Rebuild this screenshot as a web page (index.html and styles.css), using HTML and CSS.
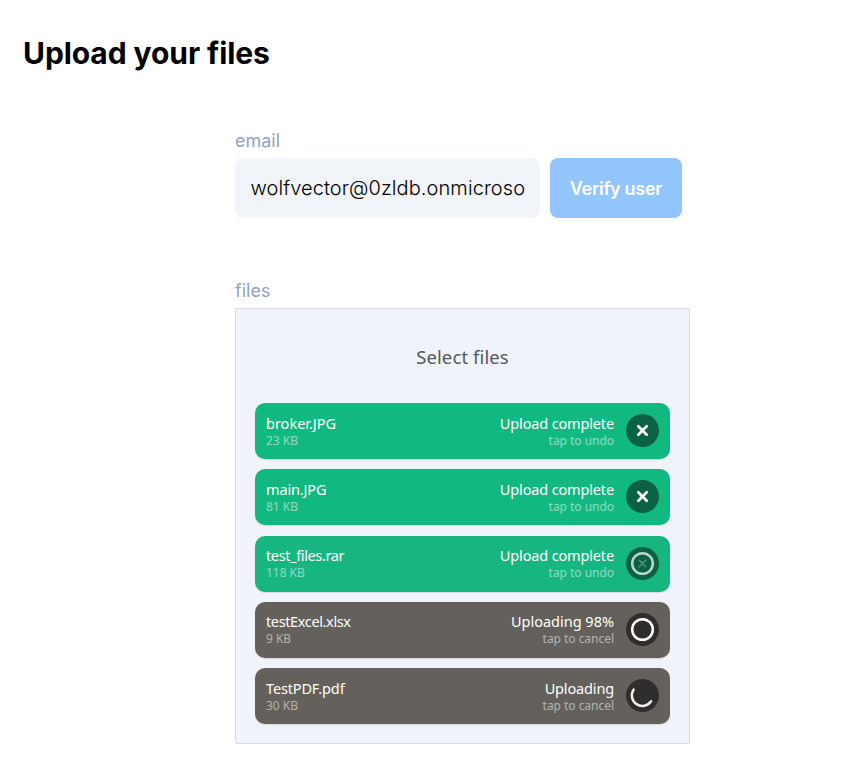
FILE: index.html
```html
<!DOCTYPE html>
<html lang="en">
<head>
<meta charset="utf-8">
<title>Upload your files</title>
<link rel="stylesheet" href="styles.css">
</head>
<body>
<h1>Upload your files</h1>
<main class="form">
  <label class="label" for="email">email</label>
  <div class="email-row">
    <div class="email" id="email">wolfvector@0zldb.onmicroso</div>
    <button class="verify">Verify user</button>
  </div>
  <div class="label files-label">files</div>
  <section class="drop">
    <div class="select"><span>Select files</span></div>
    <ul class="list">
      <li class="item done">
        <div class="info"><span class="name wide">broker.JPG</span><span class="sub">23 KB</span></div>
        <div class="status"><span class="name">Upload complete</span><span class="sub">tap to undo</span></div>
        <svg class="action" viewBox="0 0 33 33"><circle cx="16.5" cy="16.5" r="16.5"/><path class="cross" d="M12.3 12.3l8.4 8.4M20.7 12.3l-8.4 8.4"/></svg>
      </li>
      <li class="item done">
        <div class="info"><span class="name">main.JPG</span><span class="sub">81 KB</span></div>
        <div class="status"><span class="name">Upload complete</span><span class="sub">tap to undo</span></div>
        <svg class="action" viewBox="0 0 33 33"><circle cx="16.5" cy="16.5" r="16.5"/><path class="cross" d="M12.3 12.3l8.4 8.4M20.7 12.3l-8.4 8.4"/></svg>
      </li>
      <li class="item done settling">
        <div class="info"><span class="name tight">test_files.rar</span><span class="sub">118 KB</span></div>
        <div class="status"><span class="name">Upload complete</span><span class="sub">tap to undo</span></div>
        <svg class="action" viewBox="0 0 33 33"><circle cx="16.5" cy="16.5" r="16.5"/><path class="cross faint" d="M13.3 13.3l6.4 6.4M19.7 13.3l-6.4 6.4"/><circle class="ring fading" cx="16.5" cy="16.5" r="10.3"/></svg>
      </li>
      <li class="item busy">
        <div class="info"><span class="name tight">testExcel.xlsx</span><span class="sub">9 KB</span></div>
        <div class="status"><span class="name wide">Uploading 98%</span><span class="sub">tap to cancel</span></div>
        <svg class="action" viewBox="0 0 33 33"><circle cx="16.5" cy="16.5" r="16.5"/><circle class="ring" cx="16.5" cy="16.5" r="10.3"/></svg>
      </li>
      <li class="item busy">
        <div class="info"><span class="name">TestPDF.pdf</span><span class="sub">30 KB</span></div>
        <div class="status"><span class="name">Uploading</span><span class="sub">tap to cancel</span></div>
        <svg class="action" viewBox="0 0 33 33"><circle cx="16.5" cy="16.5" r="16.5"/><path class="ring arc" d="M7.6 10.6A10.3 10.3 0 0 0 25.1 22.2"/></svg>
      </li>
    </ul>
  </section>
</main>
</body>
</html>
```
FILE: styles.css
```css
* { box-sizing: border-box; }
body { margin: 0; padding: 35px 0 0 23px; background: #fff; font-family: Inter, sans-serif; }
h1 { margin: 0; font-size: 30px; line-height: 36px; font-weight: 650; letter-spacing: -.08px; color: #000; }
.form { width: 455px; margin: 58px 0 0 212px; }
.label { display: block; height: 29px; font-size: 18px; line-height: 24px; color: #94a3b8; font-weight: 400; }
.files-label { margin-top: 61px; }
.email-row { display: flex; gap: 10px; }
.email { width: 305px; height: 60px; padding: 0 15.5px; border-radius: 8px; background: #f1f5f9; font-size: 20px; line-height: 60px; font-weight: 300; letter-spacing: .08px; color: #000; white-space: nowrap; overflow: hidden; }
.verify { width: 132px; height: 60px; padding: 0; border: 0; border-radius: 8px; background: #93c5fd; color: #fff; font: 600 18px Inter, sans-serif; letter-spacing: -.3px; }
.drop { height: 436px; border: 1px solid #d5dae3; border-radius: 2px; background: #f0f3f9; padding: 0 19px; font-family: "Noto Sans", sans-serif; }
.select { height: 94px; line-height: 95px; text-align: center; font-size: 18.5px; letter-spacing: .1px; color: #55595e; }
.list { list-style: none; margin: 0; padding: 0; display: grid; gap: 10.25px; }
.item { height: 56px; padding: 0 11px; border-radius: 10px; display: flex; align-items: center; color: #fff; box-shadow: 0 1px 1px rgba(0,0,0,.12); }
.done { background: #11b981; }
.settling { background: #17b57f; }
.busy { background: #64605c; }
.info, .status { display: flex; flex-direction: column; white-space: nowrap; }
.status { margin-left: auto; align-items: flex-end; }
.name { font-size: 14.5px; line-height: 19px; letter-spacing: -.15px; }
.name.wide { letter-spacing: 0; }
.name.tight { letter-spacing: -.37px; }
.sub { font-size: 12px; line-height: 16px; letter-spacing: -.03px; opacity: .5; }
.action { width: 33px; height: 33px; margin-left: 12px; flex: none; position: relative; top: -.5px; }
.action circle { fill: #0b6143; }
.busy .action circle { fill: #302e2c; }
.cross { stroke: #fff; stroke-width: 2.7; fill: none; stroke-linecap: round; }
.cross.faint { stroke: #4c947b; stroke-width: 1.5; }
.action .ring { fill: none; stroke: #fff; stroke-width: 2.5; stroke-linecap: round; }
.busy .action circle.ring { fill: none; }
.action .fading { stroke: #b8d5ca; }
.action .arc { stroke: #eee; }
```
